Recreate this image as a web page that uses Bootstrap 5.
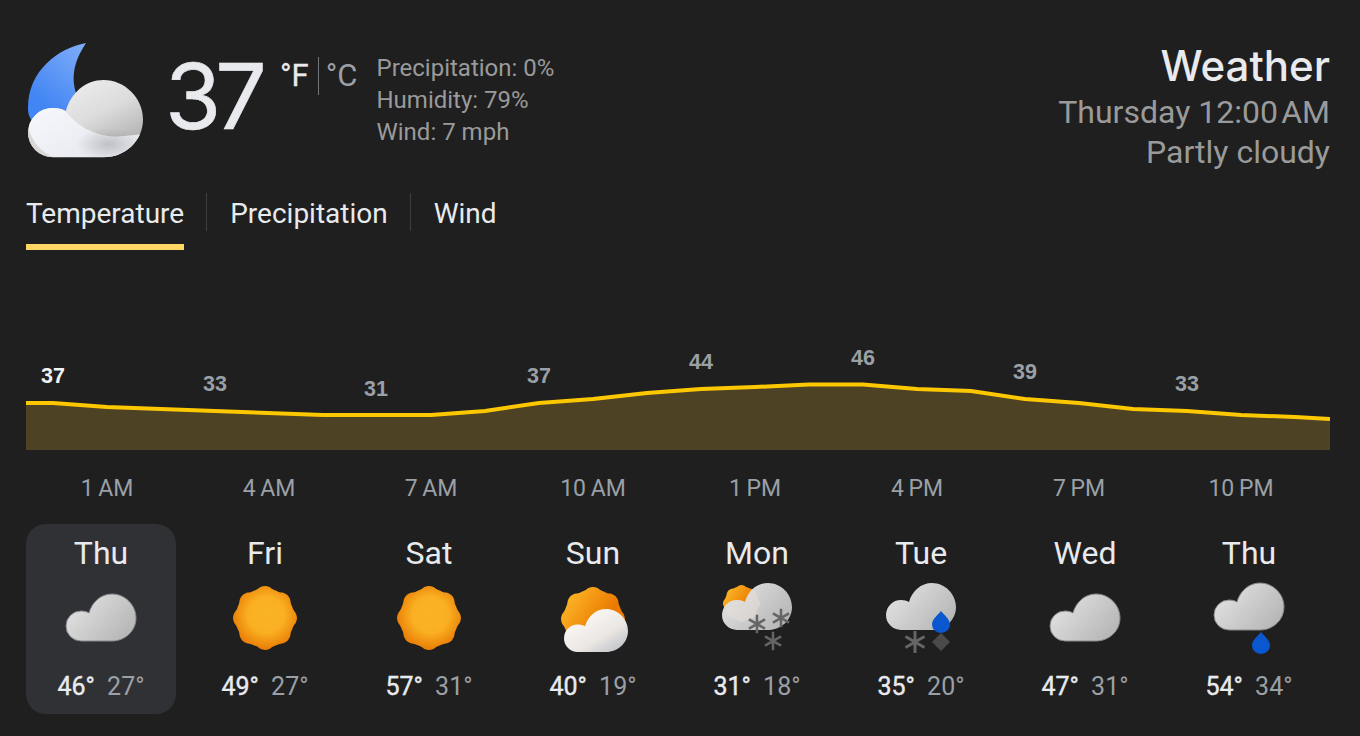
<!DOCTYPE html>
<html lang="en">
<head>
  <meta charset="UTF-8" />
  <meta name="viewport" content="width=device-width, initial-scale=1.0"/>
  <title>Weather</title>
  <link href="https://cdn.jsdelivr.net/npm/bootstrap@5.3.3/dist/css/bootstrap.min.css" rel="stylesheet">
  <style>
    html, body { height: 100%; overflow: hidden; }
    body { background: #1f1f1f; color: #e8eaed; font-family: Roboto, "Liberation Sans", sans-serif; }
    .wx-page { width: 1360px; height: 736px; padding: 42px 30px 0 26px; }
    .wx-head { height: 130px; }
    .wx-main-icon { width: 118px; height: 118px; flex: none; }
    .wx-now { font-family: Inter, Roboto, sans-serif; font-weight: 400; -webkit-text-stroke: .6px #e8eaed; font-size: 91px; line-height: 100px; letter-spacing: -6px; width: 115px; margin: 4px 0 0 21px; color: #e8eaed; }
    .wx-units { font-size: 31px; line-height: 38px; padding-top: 15px; }
    .wx-units span:first-child { -webkit-text-stroke: .3px #e8eaed; }
    .wx-units span + span { border-left: 1px solid #70757a; padding-left: 7px; margin-left: 9px; color: #9aa0a6; }
    .wx-facts { font-size: 24px; line-height: 32px; color: #9a9a9a; margin-left: 19px; padding-top: 10px; }
    .wx-title { font-family: Inter, Roboto, sans-serif; font-weight: 500; font-size: 42px; line-height: 48px; color: #e8eaed; }
    .wx-sub { font-size: 32px; line-height: 40px; color: #9a9a9a; position: relative; top: 2px; }
    .wx-tabs { margin-top: 21px; font-size: 28px; flex-wrap: nowrap; }
    .wx-tabs .nav-item { display: flex; }
    .wx-tabs .nav-link { color: #e8eaed; padding: 0; line-height: 42px; height: 57px; border-bottom: 6px solid transparent; }
    .wx-tabs .nav-link.active { border-bottom-color: #fdd663; }
    .wx-tabs .nav-item + .nav-item { margin-left: 22px; }
    .wx-tabs .nav-item + .nav-item::before { content: ""; flex: none; width: 1px; height: 38px; background: #3c4043; margin-right: 24px; }
    .wx-tabs .nav-item + .nav-item .nav-link { margin-left: -1px; }
    .wx-chart { display: block; width: 1304px; height: 140px; margin-top: 60px; }
    .wx-chart text { font-family: "Liberation Sans", Arial, sans-serif; font-weight: 700; font-size: 21.500px; fill: #9aa0a6; text-anchor: middle; }
    .wx-chart text.wx-cur { fill: #f1f3f4; }
    .wx-hours { display: grid; grid-template-columns: repeat(8, 162px); font-size: 23px; line-height: 28px; color: #9aa0a6; margin-top: 25px; text-align: center; }
    .wx-days { display: grid; grid-template-columns: repeat(8, 150px); column-gap: 14px; margin-top: 21px; }
    .wx-day { height: 190px; border-radius: 20px; text-align: center; padding-top: 11px; }
    .wx-day.wx-on { background: #303134; }
    .wx-name { font-size: 32px; line-height: 36px; }
    .wx-day svg { display: block; width: 150px; height: 80px; margin-top: 11px; }
    .wx-temps { font-size: 25px; line-height: 30px; margin-top: 10px; }
    .wx-temps b { font-weight: 400; -webkit-text-stroke: .4px #e8eaed; color: #e8eaed; margin-right: 6px; }
    .wx-temps span { color: #9aa0a6; }
  </style>
</head>
<body>

  <!-- shared gradients and shapes -->
  <svg width="0" height="0" class="position-absolute">
    <defs>
      <linearGradient id="gCloud" x1="0" y1="0.2" x2="1" y2="0.8">
        <stop offset="0" stop-color="#e4e4e4"/><stop offset="1" stop-color="#b4b4b4"/>
      </linearGradient>
      <linearGradient id="gBack" x1="0.25" y1="0" x2="0.95" y2="0.9">
        <stop offset="0" stop-color="#f0f0f0"/><stop offset="0.5" stop-color="#dcdcdc"/><stop offset="1" stop-color="#a8a8a8"/>
      </linearGradient>
      <linearGradient id="gFront" x1="0.1" y1="0.1" x2="0.9" y2="1">
        <stop offset="0" stop-color="#f8faff"/><stop offset="1" stop-color="#e4e6ec"/>
      </linearGradient>
      <radialGradient id="gSpot" cx="0.5" cy="0.5" r="0.5">
        <stop offset="0" stop-color="#8f9096" stop-opacity=".45"/><stop offset="1" stop-color="#8f9096" stop-opacity="0"/>
      </radialGradient>
      <linearGradient id="gWhite" x1="0.1" y1="0" x2="1" y2="1">
        <stop offset="0" stop-color="#fffdfb"/><stop offset="0.6" stop-color="#ebe7e3"/><stop offset="1" stop-color="#b4bac4"/>
      </linearGradient>
      <linearGradient id="gMoon" x1="0.8" y1="0" x2="0.3" y2="0.8">
        <stop offset="0" stop-color="#7baaf7"/><stop offset="1" stop-color="#4285f4"/>
      </linearGradient>
      <radialGradient id="gSun" cx="0.52" cy="0.45" r="0.56">
        <stop offset="0" stop-color="#fbb326"/><stop offset="0.5" stop-color="#fab022"/><stop offset="1" stop-color="#e87a04"/>
      </radialGradient>
      <linearGradient id="gSunPart" x1="0.1" y1="0.1" x2="0.7" y2="0.5">
        <stop offset="0" stop-color="#fdb728"/><stop offset="1" stop-color="#ea7a00"/>
      </linearGradient>
      <path id="cloudShape" d="M15 47a15 15 0 0 1 0-30c3 0 6 .7 8 2C26 8 35 0 46 0c13 0 24 11 24 24s-11 23-24 23z"/>
      <clipPath id="cloudClip"><use href="#cloudShape"/></clipPath>
      <path id="sunShape" d=""/>
      <path id="dropShape" d="M9 0C12 4 18 8 18 13.500a9 8.500 0 0 1-18 0C0 8 6 4 9 0z"/>
      <g id="flake" stroke="#646567" stroke-width="3" stroke-linecap="butt">
        <path d="M0-11V11M-9.500-5.500L9.500 5.500M-9.500 5.500L9.500-5.500"/>
      </g>
    </defs>
  </svg>

  <div class="wx-page">
    <div class="wx-head d-flex justify-content-between">
      <div class="d-flex align-items-start">
        <svg class="wx-main-icon" viewBox="0 0 118 118">
          <path d="M60 1C32 6 2 29 2 65c0 7 1 9 4 14L50 80V51C46 38 46 22 60 1z" fill="url(#gMoon)"/>
          <g transform="translate(2 38) scale(1.643)">
            <use href="#cloudShape" fill="url(#gBack)"/>
            <g clip-path="url(#cloudClip)">
              <path d="M0 48V30h1a15 15 0 0 1 14-13c3 0 6 .7 8 2C27 24 36 34 54 34.500L71 33V48z" fill="#d9d8d5"/>
              <path d="M15.500 47C8 44 3 38 .500 30L0 0H23V19C27 24 36 34 54 34.500L71 33V48z" fill="url(#gFront)"/>
              <ellipse cx="49" cy="39" rx="20" ry="10" fill="url(#gSpot)"/>
            </g>
          </g>
        </svg>
        <div class="wx-now">37</div>
        <div class="wx-units d-flex"><span>°F</span><span>°C</span></div>
        <div class="wx-facts">
          <div>Precipitation: 0%</div>
          <div>Humidity: 79%</div>
          <div>Wind: 7 mph</div>
        </div>
      </div>
      <div class="text-end">
        <div class="wx-title">Weather</div>
        <div class="wx-sub">Thursday 12:00&#8202;AM</div>
        <div class="wx-sub">Partly cloudy</div>
      </div>
    </div>

    <ul class="nav wx-tabs">
      <li class="nav-item"><a class="nav-link active" href="#">Temperature</a></li>
      <li class="nav-item"><a class="nav-link" href="#">Precipitation</a></li>
      <li class="nav-item"><a class="nav-link" href="#">Wind</a></li>
    </ul>

    <svg class="wx-chart" viewBox="0 0 1304 140">
      <path d="M0 93H27L81 97L189 101L297 105H405L459 101L513 93L567 89L621 83L675 79L729 77L783 74.500H837L891 79L945 81L999 89L1053 93L1107 99L1161 101L1215 105L1269 107L1304 109V140H0z" fill="#4e4225"/>
      <path d="M0 93H27L81 97L189 101L297 105H405L459 101L513 93L567 89L621 83L675 79L729 77L783 74.500H837L891 79L945 81L999 89L1053 93L1107 99L1161 101L1215 105L1269 107L1304 109" fill="none" stroke="#fdc800" stroke-width="4"/>
      <text class="wx-cur" x="27" y="73">37</text>
      <text x="189" y="81">33</text>
      <text x="350" y="86">31</text>
      <text x="513" y="73">37</text>
      <text x="675" y="59">44</text>
      <text x="837" y="55">46</text>
      <text x="999" y="69">39</text>
      <text x="1161" y="81">33</text>
    </svg>

    <div class="wx-hours">
      <div>1&#8201;AM</div><div>4&#8201;AM</div><div>7&#8201;AM</div><div>10&#8201;AM</div>
      <div>1&#8201;PM</div><div>4&#8201;PM</div><div>7&#8201;PM</div><div>10&#8201;PM</div>
    </div>

    <div class="wx-days">
      <div class="wx-day wx-on">
        <div class="wx-name">Thu</div>
        <svg viewBox="0 0 150 80"><use href="#cloudShape" x="40" y="12" fill="url(#gCloud)" stroke="#85888c"/></svg>
        <div class="wx-temps"><b>46°</b> <span>27°</span></div>
      </div>
      <div class="wx-day">
        <div class="wx-name">Fri</div>
        <svg viewBox="0 0 150 80"><use href="#sunShape" x="43" y="4" fill="url(#gSun)"/></svg>
        <div class="wx-temps"><b>49°</b> <span>27°</span></div>
      </div>
      <div class="wx-day">
        <div class="wx-name">Sat</div>
        <svg viewBox="0 0 150 80"><use href="#sunShape" x="43" y="4" fill="url(#gSun)"/></svg>
        <div class="wx-temps"><b>57°</b> <span>31°</span></div>
      </div>
      <div class="wx-day">
        <div class="wx-name">Sun</div>
        <svg viewBox="0 0 150 80">
          <use href="#sunShape" x="43" y="5" fill="url(#gSunPart)"/>
          <use href="#cloudShape" transform="translate(46 27) scale(.914)" fill="url(#gWhite)"/>
        </svg>
        <div class="wx-temps"><b>40°</b> <span>19°</span></div>
      </div>
      <div class="wx-day">
        <div class="wx-name">Mon</div>
        <svg viewBox="0 0 150 80">
          <use href="#sunShape" transform="translate(41 3) scale(.58)" fill="url(#gSunPart)"/>
          <use href="#cloudShape" x="40" y="1" fill="url(#gCloud)"/>
          <g transform="translate(40 1)" clip-path="url(#cloudClip)">
            <use href="#sunShape" transform="translate(1 2) scale(.58)" fill="#e6dfda" fill-opacity=".5"/>
          </g>
          <use href="#flake" transform="translate(75 42) scale(.85)"/>
          <use href="#flake" transform="translate(99 36) scale(.85)"/>
          <use href="#flake" transform="translate(91 59) scale(.85)"/>
        </svg>
        <div class="wx-temps"><b>31°</b> <span>18°</span></div>
      </div>
      <div class="wx-day">
        <div class="wx-name">Tue</div>
        <svg viewBox="0 0 150 80">
          <use href="#cloudShape" x="40" y="1" fill="url(#gCloud)"/>
          <use href="#dropShape" x="86" y="29" fill="#0b57d0"/>
          <use href="#flake" x="69" y="60"/>
          <path d="M95 51l9 9-9 9-9-9z" fill="#4a4a4a"/>
        </svg>
        <div class="wx-temps"><b>35°</b> <span>20°</span></div>
      </div>
      <div class="wx-day">
        <div class="wx-name">Wed</div>
        <svg viewBox="0 0 150 80"><use href="#cloudShape" x="40" y="12" fill="url(#gCloud)" stroke="#85888c"/></svg>
        <div class="wx-temps"><b>47°</b> <span>31°</span></div>
      </div>
      <div class="wx-day">
        <div class="wx-name">Thu</div>
        <svg viewBox="0 0 150 80">
          <use href="#cloudShape" x="40" y="1" fill="url(#gCloud)" stroke="#85888c"/>
          <use href="#dropShape" x="78" y="50" fill="#0b57d0"/>
        </svg>
        <div class="wx-temps"><b>54°</b> <span>34°</span></div>
      </div>
    </div>
  </div>

  <script src="https://cdn.jsdelivr.net/npm/bootstrap@5.3.3/dist/js/bootstrap.bundle.min.js"></script>
  <script>
    // wavy sun outline: 8 bumps, smooth between tip and valley
    (function () {
      const pts = [];
      for (let i = 0; i < 16; i++) {
        const a = i * Math.PI / 8 - Math.PI / 2;
        pts.push({ a: a, r: i % 2 ? 29.5 : 32 });
      }
      const xy = (r, a) => (32 + r * Math.cos(a)).toFixed(2) + ' ' + (32 + r * Math.sin(a)).toFixed(2);
      let d = 'M' + xy(pts[0].r, pts[0].a);
      const k = Math.PI / 8 * 0.55;
      pts.forEach((p, i) => {
        const q = pts[(i + 1) % 16];
        const qa = i === 15 ? q.a + 2 * Math.PI : q.a;
        d += 'C' + xy(p.r, p.a + k) + ' ' + xy(q.r, qa - k) + ' ' + xy(q.r, qa);
      });
      document.getElementById('sunShape').setAttribute('d', d + 'z');
    })();
  </script>
</body>
</html>
